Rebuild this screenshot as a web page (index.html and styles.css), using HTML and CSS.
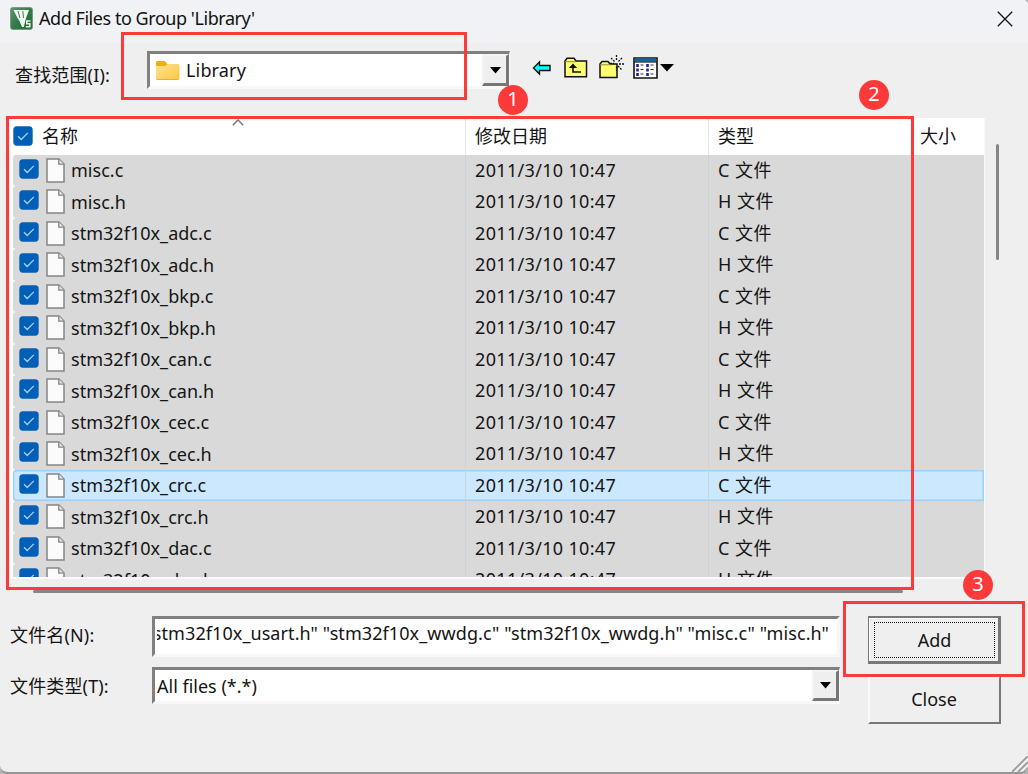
FILE: index.html
```
<!DOCTYPE html>
<html lang="zh-CN">
<head>
<meta charset="utf-8">
<title>Add Files to Group 'Library'</title>
<link rel="stylesheet" href="styles.css">
</head>
<body>
<svg class="defs" width="0" height="0">
  <symbol id="check" viewBox="0 0 20 20"><rect x=".3" y=".3" width="19.4" height="19.4" rx="3.6" fill="#025fb8"/><path d="M5 10.3l3.2 3.2 6.6-6.6" fill="none" stroke="#a9d0f0" stroke-width="1.3"/></symbol>
  <symbol id="file" viewBox="0 0 19 25"><path d="M1 1h12l5 5v18H1z" fill="#fbfbfb" stroke="#858585" stroke-width="1.5"/><path d="M12.8 1v5.2H18" fill="#e6e6e6" stroke="#858585" stroke-width="1.3"/></symbol>
</svg>
<main class="dialog">
  <header class="titlebar">
    <svg class="app-icon" viewBox="0 0 23 23"><defs><linearGradient id="g" x1="0" y1="0" x2="1" y2="1"><stop offset="0" stop-color="#5d9668"/><stop offset=".5" stop-color="#2e7c47"/><stop offset="1" stop-color="#1d6537"/></linearGradient></defs><rect x=".6" y=".6" width="21.8" height="21.8" rx="2" fill="url(#g)" stroke="#78947c"/><path d="M3.500 3h15.500l-3 8-2.200 9h-1.800L9.500 14 7.500 11z" fill="#f4faf3"/><path d="M8 4l2 7M12.800 4l.8 7" stroke="#3c8352" stroke-width="1"/><path d="M20.500 14h-3.700v2.700h3v3h-4" fill="none" stroke="#e4f0e5" stroke-width="1.600"/></svg>
    <h1 class="title">Add Files to Group 'Library'</h1>
    <svg class="close" viewBox="0 0 16 16"><path d="M.8.8l14.4 14.4M15.2.8L.8 15.2" stroke="#111" stroke-width="1.3"/></svg>
  </header>

  <section class="lookin">
    <label class="label lookin-label">查找范围(I):</label>
    <div class="sunken combo lookin-combo">
      <svg class="folder" viewBox="0 0 25 21"><defs><linearGradient id="f" x1="0" y1="0" x2="1" y2="1"><stop offset="0" stop-color="#ffe394"/><stop offset="1" stop-color="#fbc83e"/></linearGradient></defs><path d="M1 6V2.5Q1 1 2.5 1h7l3 3H22v7H1z" fill="#f3ad16"/><path d="M1 6h9l3-2h10q1.500 0 1.500 1.500V18q0 1.800-1.800 1.800H2.500Q1 19.800 1 18z" fill="url(#f)"/><path d="M1.500 19.500h22" stroke="#eab02c"/></svg>
      <span class="lib">Library</span>
      <span class="drop"><svg viewBox="0 0 11 7"><path d="M0 0h11L5.500 6.500z"/></svg></span>
    </div>
    <div class="tools">
      <svg class="t-back" viewBox="0 0 20 16"><path d="M1.500 8l6-6v3.500h10.500v5H7.500V14z" fill="#0ff" stroke="#111" stroke-width="1.400"/></svg>
      <svg class="t-up" viewBox="0 0 24 21"><path d="M1 19.800V4l2-2.800h7L12 4h10.500v15.800z" fill="#ffff72" stroke="#111" stroke-width="1.500"/><path d="M1 4.700h11" stroke="#8b8b34"/><path d="M9 7.500V15h8" fill="none" stroke="#111" stroke-width="1.600"/><path d="M4.800 11L9 6.500l4.200 4.500z" fill="#111"/></svg>
      <svg class="t-new" viewBox="0 0 25 24"><path d="M1 22.500V9l2-2.500h6L11 9h7v13.500z" fill="#ffff72" stroke="#111" stroke-width="1.500"/><path d="M1 9.800h12" stroke="#8b8b34"/><path d="M17.500 0v5M12 3l4 4m7-4l-4 4M20 9h5M19 11l4 4M17.500 11.500v4M11 8.500h4" stroke="#111" stroke-width="1.300" stroke-dasharray="2 1"/></svg>
      <svg class="t-view" viewBox="0 0 41 22"><path d="M1 1h23v20H1z" fill="#fff" stroke="#111" stroke-width="1.600"/><path d="M1.800 1.500h21.500v3H1.800z" fill="#0867aa"/><path d="M1 5h23" stroke="#111" stroke-width="1.200"/><path d="M4.500 7v3m0 1.500v3m0 1.500v3M14.500 7v3m0 1.500v3m0 1.500v3" stroke="#20209a" stroke-width="2.600"/><path d="M7.500 8h3m-3 4.500h3m-3 4.500h3M17.500 8h3m-3 4.500h3m-3 4.500h3" stroke="#333" stroke-width="1.200"/><path d="M27 7h14l-7 7.500z" fill="#000"/></svg>
    </div>
  </section>

  <section class="files">
    <div class="listview">
      <div class="row head">
        <span class="c-name"><svg class="check"><use href="#check"/></svg>名称<svg class="sort" viewBox="0 0 12 7"><path d="M.8 6.200L6 1l5.200 5.200" fill="none" stroke="#777" stroke-width="1.500"/></svg></span>
        <span class="c-date">修改日期</span><span class="c-type">类型</span><span class="c-size">大小</span>
      </div>
      <div class="row"><span class="c-name"><svg class="check"><use href="#check"/></svg><svg class="file"><use href="#file"/></svg>misc.c</span><span class="c-date">2011/3/10 10:47</span><span class="c-type">C 文件</span><span class="c-size"></span></div>
      <div class="row"><span class="c-name"><svg class="check"><use href="#check"/></svg><svg class="file"><use href="#file"/></svg>misc.h</span><span class="c-date">2011/3/10 10:47</span><span class="c-type">H 文件</span><span class="c-size"></span></div>
      <div class="row"><span class="c-name"><svg class="check"><use href="#check"/></svg><svg class="file"><use href="#file"/></svg>stm32f10x_adc.c</span><span class="c-date">2011/3/10 10:47</span><span class="c-type">C 文件</span><span class="c-size"></span></div>
      <div class="row"><span class="c-name"><svg class="check"><use href="#check"/></svg><svg class="file"><use href="#file"/></svg>stm32f10x_adc.h</span><span class="c-date">2011/3/10 10:47</span><span class="c-type">H 文件</span><span class="c-size"></span></div>
      <div class="row"><span class="c-name"><svg class="check"><use href="#check"/></svg><svg class="file"><use href="#file"/></svg>stm32f10x_bkp.c</span><span class="c-date">2011/3/10 10:47</span><span class="c-type">C 文件</span><span class="c-size"></span></div>
      <div class="row"><span class="c-name"><svg class="check"><use href="#check"/></svg><svg class="file"><use href="#file"/></svg>stm32f10x_bkp.h</span><span class="c-date">2011/3/10 10:47</span><span class="c-type">H 文件</span><span class="c-size"></span></div>
      <div class="row"><span class="c-name"><svg class="check"><use href="#check"/></svg><svg class="file"><use href="#file"/></svg>stm32f10x_can.c</span><span class="c-date">2011/3/10 10:47</span><span class="c-type">C 文件</span><span class="c-size"></span></div>
      <div class="row"><span class="c-name"><svg class="check"><use href="#check"/></svg><svg class="file"><use href="#file"/></svg>stm32f10x_can.h</span><span class="c-date">2011/3/10 10:47</span><span class="c-type">H 文件</span><span class="c-size"></span></div>
      <div class="row"><span class="c-name"><svg class="check"><use href="#check"/></svg><svg class="file"><use href="#file"/></svg>stm32f10x_cec.c</span><span class="c-date">2011/3/10 10:47</span><span class="c-type">C 文件</span><span class="c-size"></span></div>
      <div class="row"><span class="c-name"><svg class="check"><use href="#check"/></svg><svg class="file"><use href="#file"/></svg>stm32f10x_cec.h</span><span class="c-date">2011/3/10 10:47</span><span class="c-type">H 文件</span><span class="c-size"></span></div>
      <div class="row focused"><span class="c-name"><svg class="check"><use href="#check"/></svg><svg class="file"><use href="#file"/></svg>stm32f10x_crc.c</span><span class="c-date">2011/3/10 10:47</span><span class="c-type">C 文件</span><span class="c-size"></span></div>
      <div class="row"><span class="c-name"><svg class="check"><use href="#check"/></svg><svg class="file"><use href="#file"/></svg>stm32f10x_crc.h</span><span class="c-date">2011/3/10 10:47</span><span class="c-type">H 文件</span><span class="c-size"></span></div>
      <div class="row"><span class="c-name"><svg class="check"><use href="#check"/></svg><svg class="file"><use href="#file"/></svg>stm32f10x_dac.c</span><span class="c-date">2011/3/10 10:47</span><span class="c-type">C 文件</span><span class="c-size"></span></div>
      <div class="row"><span class="c-name"><svg class="check"><use href="#check"/></svg><svg class="file"><use href="#file"/></svg>stm32f10x_dac.h</span><span class="c-date">2011/3/10 10:47</span><span class="c-type">H 文件</span><span class="c-size"></span></div>
    </div>
    <div class="vscroll"></div>
    <div class="hscroll"></div>
  </section>

  <footer class="footer">
    <div class="fields">
      <label class="label">文件名(N):</label>
      <div class="sunken filename"><span class="clip"><span class="names">stm32f10x_usart.h" "stm32f10x_wwdg.c" "stm32f10x_wwdg.h" "misc.c" "misc.h"</span></span></div>
      <label class="label">文件类型(T):</label>
      <div class="sunken combo filetype"><span class="all">All files (*.*)</span><span class="drop"><svg viewBox="0 0 11 7"><path d="M0 0h11L5.500 6.500z"/></svg></span></div>
    </div>
    <div class="buttons">
      <button class="btn primary"><span class="focus">Add</span></button>
      <button class="btn">Close</button>
    </div>
  </footer>

  <svg class="grip" viewBox="0 0 16 16"><path d="M0 16L16 0M6 16L16 6M12 16l4-4" stroke="#999" stroke-width="1.800"/></svg>
  <div class="mark mark-folder"></div><div class="mark mark-list"></div><div class="mark mark-add"></div>
  <b class="badge b1">1</b><b class="badge b2">2</b><b class="badge b3">3</b>
</main>
</body>
</html>
```
FILE: styles.css
```
* { box-sizing: border-box; }
body { margin: 0; background: #b5b5b5; }
svg { display: block; flex: none; }
.defs { position: absolute; }
.dialog {
  position: relative; width: 1028px; height: 774px; overflow: hidden;
  display: flex; flex-direction: column;
  background: #efefef; border-bottom: 2px solid #969696; border-radius: 0 5px 8px 8px;
  font: 18px/24px "Noto Sans", "Noto Sans CJK SC", sans-serif; color: #141414; white-space: nowrap;
}
.titlebar { height: 43px; flex: none; display: flex; align-items: flex-start; background: #f0f2f6; padding: 7px 15px 0 10px; }
.app-icon { width: 23px; height: 23px; }
.title { margin: -1px 0 0 6px; flex: 1; font-size: 18px; font-weight: 400; line-height: 24px; letter-spacing: -.45px; color: #111; }
.close { width: 16px; height: 16px; margin-top: 4px; }

.lookin { height: 75px; flex: none; display: flex; align-items: flex-start; padding-left: 15px; }
.lookin-label { width: 132px; padding-top: 20px; }
.label { font-size: 18px; letter-spacing: .15px; }
.sunken { background: #fff; border: 3px solid; border-color: #808080 #f8f8f8 #f8f8f8 #808080; }
.combo { display: flex; align-items: center; border-right-width: 1px; }
.lookin-combo { width: 363px; height: 38px; margin-top: 8px; padding-left: 5px; }
.folder { width: 25px; height: 21px; margin-top: 1px; }
.lib { margin: -1px 0 0 6px; flex: 1; letter-spacing: .15px; }
.drop { align-self: stretch; width: 27px; display: flex; align-items: center; justify-content: center; padding-top: 1px; background: #efefef; border: 2px solid; border-color: #f4f4f4 #777 #777 #f4f4f4; border-right-width: 3px; border-bottom-width: 3px; }
.drop svg { width: 11px; height: 7px; }
.tools { display: flex; align-items: flex-start; padding-left: 22px; }
.t-back { width: 20px; height: 16px; margin-top: 17px; }
.t-up { width: 24px; height: 21px; margin: 14px 0 0 12px; }
.t-new { width: 25px; height: 24px; margin: 12px 0 0 11px; }
.t-view { width: 41px; height: 22px; margin: 14px 0 0 9px; }

.files { height: 475px; flex: none; display: grid; grid-template: 461px 14px / 985px 1fr; }
.listview { margin-left: 10px; padding-left: 3px; border-right: 1px solid #fafafa; background: #fff; overflow: hidden; border-bottom: 2px solid #fbfbfb; }
.row { display: grid; grid-template-columns: 452px 243px 203px 1fr; height: 31.5px; background: #d9d9d9; border-radius: 3px 0 0 3px; }
.row > span { display: flex; align-items: center; padding: 0 0 1px 9px; border-left: 1px solid #ccd2d7; }
.row > .c-name { padding: 0 0 0 6px; border: 0; }
.row > .c-size { border: 0; }
.c-date { letter-spacing: .33px; }
.c-type { letter-spacing: .5px; }
.c-name { letter-spacing: .03px; }
.check { width: 20px; height: 20px; margin-top: -3px; }
.file { width: 19px; height: 25px; margin: 0 6px 0 7px; }
.row.head { height: 36.5px; background: #fff; }
.row.head > .c-name { position: relative; padding-left: 0; }
.head .check { margin: 0 9px 0 0; }
.row.head > span { padding-bottom: 1px; border-color: #e5e5e5; letter-spacing: 0; }
.sort { position: absolute; left: 219px; top: 1px; width: 12px; height: 7px; }
.row.focused { background: #cce8ff; box-shadow: inset 0 0 0 1.500px #99d1ff; }
.vscroll { width: 3px; height: 116px; margin: 26px 0 0 11px; border-radius: 2px; background: #868686; }
.hscroll { width: 870px; height: 3px; margin: 11px 0 0 33px; border-radius: 2px; background: #868686; }

.footer { flex: 1; display: flex; padding: 23px 0 0 10px; }
.fields { width: 830px; display: grid; grid-template: 42px 38px / 142px 688px; row-gap: 9px; align-content: start; }
.fields .label { padding-top: 7px; }
.filename { height: 41px; padding: 2px 8px 0 2px; }
.clip { display: flex; justify-content: flex-end; overflow: hidden; }
.names { letter-spacing: .08px; }
.filetype { height: 37px; padding-left: 2px; }
.all { flex: 1; }
.buttons { padding-left: 28px; display: flex; flex-direction: column; gap: 12px; }
.btn { width: 133px; height: 48px; padding: 2px 4px 4px 3px; font: inherit; color: inherit; background: #efefef; border: 2px solid; border-color: #fafafa #777 #777 #fafafa; }
.btn.primary { border: 1px solid #777; border-width: 2px 3px 3px 1px; padding: 4px 3px 3px 5px; box-shadow: inset 1px 1px #fff; }
.focus { display: flex; align-items: center; justify-content: center; height: 100%; padding-bottom: 1px; border: 1px dotted #111; }

.grip { position: absolute; right: 0; bottom: 0; width: 16px; height: 16px; }
.mark { position: absolute; border: 3px solid #fb3a39; }
.mark-folder { left: 121px; top: 32px; width: 346px; height: 68px; }
.mark-list { left: 6px; top: 116px; width: 908px; height: 474px; }
.mark-add { left: 843px; top: 601px; width: 182px; height: 76px; }
.badge { position: absolute; width: 30px; height: 30px; border-radius: 50%; background: #fb3a39; color: #fff; font-weight: 400; font-size: 20px; line-height: 28px; text-align: center; }
.b1 { left: 498px; top: 85px; }
.b2 { left: 859px; top: 80px; }
.b3 { left: 963px; top: 570px; }
```
